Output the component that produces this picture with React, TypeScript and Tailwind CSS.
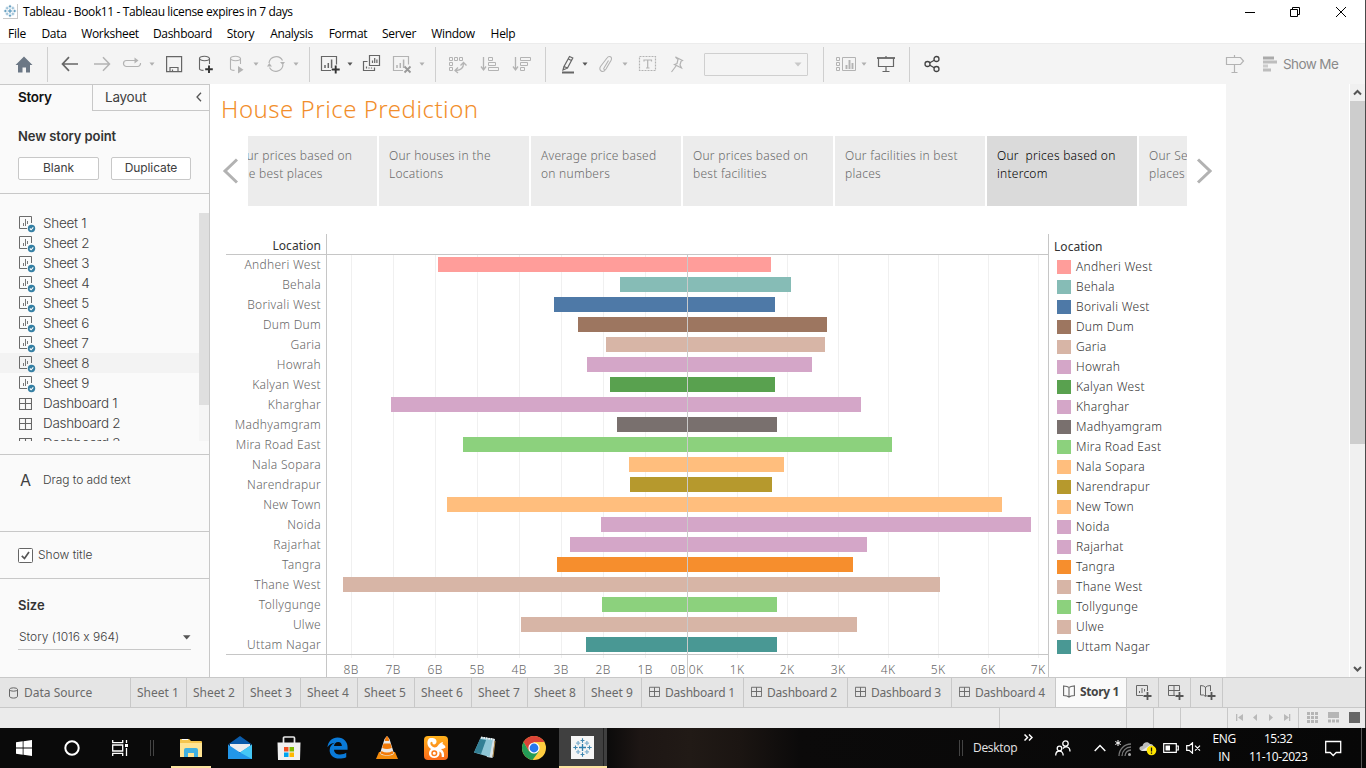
import type { ReactNode } from "react";

const LOCATIONS: { name: string; color: string; left: number; right: number }[] = [
  { name: "Andheri West", color: "#ff9d9a", left: 249, right: 84 },
  { name: "Behala", color: "#86bcb6", left: 67, right: 104 },
  { name: "Borivali West", color: "#4e79a7", left: 133, right: 88 },
  { name: "Dum Dum", color: "#9d7660", left: 109, right: 140 },
  { name: "Garia", color: "#d7b5a6", left: 81, right: 138 },
  { name: "Howrah", color: "#d4a6c8", left: 100, right: 125 },
  { name: "Kalyan West", color: "#59a14f", left: 77, right: 88 },
  { name: "Kharghar", color: "#d4a6c8", left: 296, right: 174 },
  { name: "Madhyamgram", color: "#79706e", left: 70, right: 90 },
  { name: "Mira Road East", color: "#8cd17d", left: 224, right: 205 },
  { name: "Nala Sopara", color: "#ffbe7d", left: 58, right: 97 },
  { name: "Narendrapur", color: "#b6992d", left: 57, right: 85 },
  { name: "New Town", color: "#ffbe7d", left: 240, right: 315 },
  { name: "Noida", color: "#d4a6c8", left: 86, right: 344 },
  { name: "Rajarhat", color: "#d4a6c8", left: 117, right: 180 },
  { name: "Tangra", color: "#f68e2d", left: 130, right: 166 },
  { name: "Thane West", color: "#d7b5a6", left: 344, right: 253 },
  { name: "Tollygunge", color: "#8cd17d", left: 85, right: 90 },
  { name: "Ulwe", color: "#d7b5a6", left: 166, right: 170 },
  { name: "Uttam Nagar", color: "#499894", left: 101, right: 90 },
];

const GRID_X = [24, 66, 108, 150, 192, 234, 276, 318, 410, 460, 511, 561, 611, 661, 711];
const TICKS: [string, number][] = [
  ["8B", 24], ["7B", 66], ["6B", 108], ["5B", 150], ["4B", 192], ["3B", 234], ["2B", 276], ["1B", 318],
  ["0B", 351], ["0K", 369], ["1K", 410], ["2K", 460], ["3K", 511], ["4K", 561], ["5K", 611], ["6K", 661], ["7K", 711],
];

const MENUS: [string, string][] = [
  ["File", "w-[34px]"], ["Data", "w-[40px]"], ["Worksheet", "w-[72px]"], ["Dashboard", "w-[73px]"], ["Story", "w-[43px]"],
  ["Analysis", "w-[59px]"], ["Format", "w-[54px]"], ["Server", "w-[48px]"], ["Window", "w-[60px]"], ["Help", "w-[40px]"],
];

const POINTS = [
  ["Our prices based on", "the best places"],
  ["Our houses in the", "Locations"],
  ["Average price based", "on numbers"],
  ["Our prices based on", "best facilities"],
  ["Our facilities in best", "places"],
  ["Our\u00a0 prices based on", "intercom"],
  ["Our Services in best", "places"],
];

function Ico({ className = "", w = 20, h = 20, c = "#666", sw = 1, children }: { className?: string; w?: number; h?: number; c?: string; sw?: number; children: ReactNode }) {
  return (
    <svg className={`shrink-0 ${className}`} width={w} height={h} viewBox={`0 0 ${w} ${h}`} fill="none" stroke={c} strokeWidth={sw}>
      {children}
    </svg>
  );
}

const Sep = ({ className }: { className: string }) => <div className={`h-[35px] w-px shrink-0 bg-[#cfcfcf] ${className}`} />;

const Caret = ({ className, c = "#b0b0b0" }: { className: string; c?: string }) => (
  <svg className={`shrink-0 ${className}`} width="6" height="4" viewBox="0 0 6 4">
    <path d="M.5.5h5L3 3.7z" fill={c} />
  </svg>
);

function TableauMark({ size, className = "" }: { size: number; className?: string }) {
  return (
    <svg className={className} width={size} height={size} viewBox="0 0 24 24" fill="none">
      <path d="M12 8v8M8 12h8" stroke="#2f7fae" strokeWidth="1.5" />
      <path d="M12 1.5v5M9.8 4h4.4M12 17.5v5M9.8 20h4.4M1.5 12h5M4 9.8v4.4M17.5 12h5M20 9.8v4.4" stroke="#3f87b0" strokeWidth="1.3" />
      <path d="M7 4.5v5M4.5 7h5M17 4.5v5M14.5 7h5M7 14.5v5M4.5 17h5M17 14.5v5M14.5 17h5" stroke="#85b3cf" strokeWidth="1.6" />
    </svg>
  );
}

function Toolbar() {
  const g = "#b3b3b3";
  return (
    <div className="flex h-[41px] items-center border-t border-[#ececec] bg-[#f4f4f4]">
      <Ico className="ml-[14px]" c="none">
        <path d="M10 2.500 18.500 11H16v7.500h-4v-5H8.500v5H4V11H1.500z" fill="#6b7785" />
      </Ico>
      <Sep className="ml-[13px]" />
      <Ico className="ml-3" sw={1.700}><path d="M2.500 10H18M9 3.200 2.500 10 9 16.800" /></Ico>
      <Ico className="ml-3" sw={1.500} c={g}><path d="M2 10h15.500M11 3.200 17.500 10 11 16.800" /></Ico>
      <Ico className="ml-[10px]" c={g} sw={1.200}>
        <path d="M11 6.500H4.500a3 3 0 0 0 0 6h11a3 3 0 0 0 3-3.500M8 6.500h7" />
        <path d="m12.500 3.500 4 3-4 3z" fill={g} stroke="none" />
      </Ico>
      <Caret className="ml-[7px]" />
      <Ico className="ml-[9px]" sw={1.200}><path d="M2.600 2.600h15v15h-15zM6 17.500v-4h8v4M8.500 17v-1.500" /></Ico>
      <Ico className="ml-3" sw={1.100}>
        <ellipse cx="8.500" cy="4.500" rx="5" ry="2.200" /><path d="M3.500 4.500v10.200c0 .8 1.500 1.600 4 1.700M13.500 4.500V10" />
        <path d="M13 11.500v7.500M9.200 15.300h7.600" stroke="#333" strokeWidth="1.900" />
      </Ico>
      <Ico className="ml-[11px]" c={g} sw={1.100}>
        <ellipse cx="8.500" cy="4.500" rx="5" ry="2.200" /><path d="M3.500 4.500v10.200c0 .8 1.500 1.600 4 1.700M13.500 4.500V10" />
        <path d="m11 12 5.500 3.700-5.500 3.700z" fill={g} stroke="none" />
      </Ico>
      <Caret className="ml-[6px]" />
      <Ico className="ml-[7px]" c={g} sw={1.200}>
        <path d="M3 9a7.200 7.200 0 0 1 13.500-2.500M17 10.500A7.200 7.200 0 0 1 3.500 13.500" />
        <path d="M14 8h5l-2.300 3zM1 12.500h5L3.300 9z" fill={g} stroke="none" />
      </Ico>
      <Caret className="ml-[7px]" />
      <Sep className="ml-[10px]" />
      <Ico className="ml-[10px]">
        <path d="M11 16.500H1.500v-14h15v8" strokeWidth="1.200" /><path d="M5 14v-3M8.300 14V9M11.600 14V5.500" strokeWidth="1.500" />
        <path d="M15.700 11.500v8M11.700 15.500h8" stroke="#333" strokeWidth="1.900" />
      </Ico>
      <Caret className="ml-[7px]" c="#555" />
      <Ico className="ml-[9px]">
        <path d="M7.500 1.500h10v10h-10zM5.500 7.500h-4v9h11v-3" strokeWidth="1.200" /><path d="M10.500 9V6.500M12.700 9V4M14.900 9V5.500M4.500 14.500v-2M7 14.500v-1M9.500 14.500v-1" strokeWidth="1.200" />
      </Ico>
      <Ico className="ml-[10px]" c={g}>
        <path d="M11 16.500H1.500v-14h15v8" strokeWidth="1.200" /><path d="M5 14v-3M8.300 14V9M11.600 14V5.500" strokeWidth="1.500" />
        <path d="m12.500 12.500 6 6m0-6-6 6" stroke="#999" strokeWidth="1.800" />
      </Ico>
      <Caret className="ml-[7px]" />
      <Sep className="ml-[10px]" />
      <Ico className="ml-3" c={g}>
        <path d="M1.500 3.500h3v3h-3zM6.500 3.500h3v3h-3zM11.500 3.500h3v3h-3zM1.500 8.500h3v3h-3zM1.500 13.500h3v3h-3z" />
        <path d="M8 16.500c4.500-.3 7.500-3 7.500-7M12.500 11.500l3-3 3 3M10 13.500l-3 3 3 2.500" strokeWidth="1.300" />
      </Ico>
      <Ico className="ml-3" c={g}>
        <path d="M3.500 3v12.500M1 12.500 3.500 16 6 12.500" strokeWidth="1.300" /><path d="M8.500 3.500h4v3h-4zM8.500 8.500h7v3h-7zM8.500 13.500h10v3h-10z" />
      </Ico>
      <Ico className="ml-3" c={g}>
        <path d="M3.500 3v12.500M1 12.500 3.500 16 6 12.500" strokeWidth="1.300" /><path d="M8.500 3.500h10v3h-10zM8.500 8.500h7v3h-7zM8.500 13.500h4v3h-4z" />
      </Ico>
      <Sep className="ml-[13px]" />
      <Ico className="ml-3">
        <path d="M11.500 2.500 14.800 4 9.500 14 6 12.500zM6 12.500l-1 3.500 4.500-2M10.500 5l3.300 1.700" strokeWidth="1.200" /><path d="M4 18.500h12" strokeWidth="2" />
      </Ico>
      <Caret className="ml-1" c="#555" />
      <Ico className="ml-2" c={g} sw={1.100}>
        <path d="m12.500 6.500-4.500 7.500c-1 1.500 1 2.500 2 1l5-8.500c2-3.500-2-5.500-4-2.500L4.500 12.500c-2.500 4 2.500 7 5 3" />
      </Ico>
      <Caret className="ml-[6px]" />
      <Ico className="ml-[10px]" c={g} sw={1.200}>
        <path d="M1.500 2.500h16v14h-16z" strokeDasharray="2 1" />
        <path d="M6 7.500V6h7.500v1.500M9.700 6v8M8 14h3.500" />
      </Ico>
      <Ico className="ml-[9px]" c={g} sw={1.200}>
        <path d="m8.500 3 7 3.500-1.500.8-1 3.700 1.500 3-7-3.500 2.500-1 1-4zM9 12l-4.500 6" />
      </Ico>
      <div className="ml-[17px] flex h-[23px] w-[104px] items-center justify-end rounded-[1px] border border-[#cfcfcf] pr-[5px]">
        <svg width="8" height="5"><path d="M.5.5h7L4 4.500z" fill="#c8c8c8" /></svg>
      </div>
      <Sep className="ml-[15px]" />
      <Ico className="ml-[11px]" w={22} c={g}>
        <path d="M1.500 3.500h3v3h-3zM1.500 8.500h3v3h-3zM1.500 13.500h3v3h-3zM7.500 3.500h13v13h-13z" /><path d="M11.500 15v-4M14.500 15V6M17.500 15V9" strokeWidth="1.900" />
      </Ico>
      <Caret className="ml-1" />
      <Ico className="ml-[9px]">
        <path d="M1 4h18" strokeWidth="1.800" /><path d="M2.500 4v8.500h15V4M10 2v2M10 12.500v5M6.500 17.500h7" strokeWidth="1.200" />
      </Ico>
      <Sep className="ml-[13px]" />
      <Ico className="ml-3" c="#444" sw={1.300}>
        <circle cx="5.500" cy="10" r="2.500" /><circle cx="14.500" cy="5" r="2.500" /><circle cx="14.500" cy="15" r="2.500" /><path d="m7.800 8.800 4.500-2.500M7.800 11.200l4.500 2.500" />
      </Ico>
      <Ico className="ml-[283px]" c={g} sw={1.200}>
        <path d="M9.500 1v2M9.500 10.500v8M6.500 18.500h6M1.500 3.500h14l3 3.500-3 3.500h-14z" />
      </Ico>
      <Ico className="ml-[17px]" w={16} c="none">
        <path d="M1 2.500h11v3H1z" fill="#aaa" /><path d="M1 6.500h14v3H1z" fill="#bdbdbd" /><path d="M1 10.500h5v3H1z" fill="#ccc" /><path d="M1 14.500h8v3H1z" fill="#bdbdbd" />
      </Ico>
      <span className="ml-[5px] font-['Inter'] text-[13.500px] tracking-[-0.600px] text-[#8a8a8a]">Show Me</span>
    </div>
  );
}

const DashIcon = ({ size = 13 }: { size?: number }) => (
  <svg className="shrink-0" width={size} height={size} viewBox="0 0 13 13" fill="none" stroke="#666">
    <path d="M.5 1.500h12v11H.5zM6.500 1.500v11M.5 6.500h12" strokeWidth="1.100" />
  </svg>
);

function SheetIcon() {
  return (
    <svg className="shrink-0" width="17" height="17" viewBox="0 0 17 17" fill="none">
      <path d="M8 12.500H.5V.5h12V7" stroke="#6b6b6b" />
      <path d="M4.500 10V7M6.500 10V3M8.500 8V5" stroke="#777" />
      <circle cx="12.500" cy="12.500" r="3.700" fill="#357fa3" />
      <path d="m10.800 12.500 1.300 1.300 2.200-2.500" stroke="#fff" strokeWidth="1.100" />
    </svg>
  );
}

function SidePanel() {
  return (
    <aside className="flex h-[593px] w-[210px] shrink-0 flex-col border-t border-r border-[#c8c8c8] bg-[#fafafa] font-['Inter'] text-[#404040] [font-feature-settings:'calt'_0]">
      <div className="flex h-[26px]">
        <div className="w-[92px] pt-[2px] pl-[18px] text-[13.500px] leading-[21px] font-semibold tracking-[-0.300px] text-[#111]">Story</div>
        <div className="flex flex-1 justify-between border-b border-l border-[#c8c8c8] pt-[2px] pr-[6px] pl-[12px] text-[13.500px] leading-[21px] tracking-[-0.250px]">
          <span>Layout</span>
          <svg className="mt-[5px]" width="8" height="10" viewBox="0 0 8 10" fill="none" stroke="#555" strokeWidth="1.300"><path d="M6 .7 2 5l4 4.300" /></svg>
        </div>
      </div>
      <div className="flex h-[83px] flex-col border-b border-[#c8c8c8] px-[18px] pt-[15px]">
        <div className="text-[13px] leading-[20px] font-semibold tracking-[-0.080px] text-[#333]">New story point</div>
        <div className="mt-[11px] flex gap-[12px] text-[12px]">
          <div className="flex h-[23px] w-[81px] items-center justify-center rounded-[2px] border border-[#c8c8c8] bg-white pb-px">Blank</div>
          <div className="flex h-[23px] w-[80px] items-center justify-center rounded-[2px] border border-[#c8c8c8] bg-white pb-px tracking-[-0.100px]">Duplicate</div>
        </div>
      </div>
      <div className="h-[261px] border-b border-[#c8c8c8] pt-[19px]">
        <div className="flex h-[228px]">
          <div className="flex-1 overflow-hidden">
            {Array.from({ length: 12 }, (_, i) => (
              <div key={i} className={`flex h-[20px] items-center pl-[19px] text-[13.500px] font-light tracking-[-0.300px] ${i === 7 ? "bg-[#f3f3f3]" : ""}`}>
                <div className="flex w-[24px]">{i < 9 ? <span className="mt-[2px]"><SheetIcon /></span> : <DashIcon />}</div>
                {i < 9 ? `Sheet ${i + 1}` : `Dashboard ${i - 8}`}
              </div>
            ))}
          </div>
          <div className="w-[10px] bg-[#f5f5f5]"><div className="h-[192px] bg-[#dfdfdf]" /></div>
        </div>
      </div>
      <div className="flex h-[77px] items-start border-b border-[#c8c8c8] pt-[15px] pl-[20px] text-[12px]">
        <span className="w-[23px] text-[16px] leading-[20px]">A</span>
        <span className="leading-[19px] font-light tracking-[-0.080px]">Drag to add text</span>
      </div>
      <div className="flex h-[47px] items-center gap-[5px] border-b border-[#c8c8c8] pl-[18px] text-[12px] font-light">
        <svg width="15" height="15" viewBox="0 0 15 15" fill="none"><rect x=".5" y=".5" width="14" height="14" rx="1" fill="#fff" stroke="#666" /><path d="m3.800 7.800 2.700 2.700 4.500-6.500" stroke="#555" strokeWidth="1.700" /></svg>
        Show title
      </div>
      <div className="px-[18px] pt-[16px]">
        <div className="text-[13px] leading-[20px] font-semibold text-[#333]">Size</div>
        <div className="mt-[11px] flex h-[24px] items-center justify-between border-b border-[#c8c8c8] pr-0 pb-px pl-px text-[12px] font-light">
          Story (1016 x 964)
          <svg width="8" height="5"><path d="M0 .3h7.500L3.700 4.500z" fill="#555" /></svg>
        </div>
      </div>
    </aside>
  );
}

function StoryView() {
  return (
    <section className="h-[593px] w-[1016px] shrink-0 overflow-hidden bg-white font-['Noto_Sans',sans-serif] text-[12px] font-light">
      <h1 className="h-[52px] pt-[8px] pl-[11px] text-[24px] leading-[34px] tracking-[0.500px] text-[#f28e2b]">House Price Prediction</h1>
      <div className="flex h-[70px] items-center">
        <svg className="mr-[11px] mb-px ml-[12px] shrink-0" width="16" height="26" viewBox="0 0 16 26" fill="none" stroke="#b2b2b2" strokeWidth="3"><path d="M15 1.500 3 13l12 11.500" /></svg>
        <div className="ml-[-1px] flex w-[939px] overflow-hidden">
          <div className="-ml-[21px] flex gap-[2px]">
            {POINTS.map(([a, b], i) => (
              <div key={i} className={`h-[70px] w-[150px] shrink-0 pt-[11px] pl-[10px] leading-[18px] tracking-[0.250px] whitespace-nowrap ${i === 5 ? "bg-[#dadada] text-black" : "bg-[#ececec] text-[#6a6a6a]"}`}>
                <div>{a}</div>
                <div>{b}</div>
              </div>
            ))}
          </div>
        </div>
        <svg className="mb-px ml-[9px] shrink-0" width="16" height="26" viewBox="0 0 16 26" fill="none" stroke="#b2b2b2" strokeWidth="3"><path d="m2 1.500 12 11.500L2 24.500" /></svg>
      </div>
      <div className="mt-[28px] flex">
        <div className="ml-[16px] w-[101px] border-r border-[#c6c6c6] text-right tracking-[0.300px] text-[#666]">
          <div className="h-[21px] border-b border-[#c6c6c6] pt-[3px] pr-[5px] leading-[18px] font-normal tracking-[0.050px] text-[#333]">Location</div>
          <div className="h-[400px] border-b border-[#c6c6c6]">
            {LOCATIONS.map((l) => <div key={l.name} className="h-[20px] pr-[5px] leading-[20px] whitespace-nowrap">{l.name}</div>)}
          </div>
        </div>
        <div className="relative h-[443px] w-[722px] border-r border-[#c6c6c6]">
          <div className="h-[21px] border-b border-[#c6c6c6]" />
          {GRID_X.map((x) => <div key={x} className="absolute top-[21px] h-[403px] w-px bg-[#f0f0f0]" style={{ left: x }} />)}
          <div className="relative h-[400px] border-b border-[#c6c6c6] pt-[2px]">
            {LOCATIONS.map((l) => (
              <div key={l.name} className="flex h-[20px]">
                <div className="flex w-[360px] justify-end"><div className="h-[15px]" style={{ width: l.left, background: l.color }} /></div>
                <div className="h-[15px]" style={{ width: l.right, background: l.color }} />
              </div>
            ))}
          </div>
          <div className="absolute top-[21px] left-[360px] h-[422px] w-px bg-[#c9c9c9]" />
          {TICKS.map(([t, x]) => (
            <span key={t} className="absolute top-[426px] w-[30px] text-center leading-[20px] tracking-[0.200px] text-[#666]" style={{ left: x - 15 }}>{t}</span>
          ))}
        </div>
        <div className="pt-[4px] pl-[5px] tracking-[0.300px] text-[#333]">
          <div className="leading-[18px] font-normal tracking-[0.050px]">Location</div>
          {LOCATIONS.map((l) => (
            <div key={l.name} className="flex h-[20px] items-center gap-[5px] pl-[3px] leading-[20px]">
              <span className="mt-[2px] size-[14px]" style={{ background: l.color }} />
              <span className="pt-px">{l.name}</span>
            </div>
          ))}
        </div>
      </div>
    </section>
  );
}

function Scrollbar() {
  return (
    <div className="flex h-[593px] w-[15px] flex-col justify-between bg-[#f0f0f0]">
      <div>
        <svg width="15" height="17" fill="none" stroke="#555" strokeWidth="2"><path d="m4 10.500 3.500-3.500 3.500 3.500" /></svg>
        <div className="h-[343px] bg-[#cdcdcd]" />
      </div>
      <svg width="15" height="17" fill="none" stroke="#555" strokeWidth="2"><path d="m4 7 3.500 3.500L11 7" /></svg>
    </div>
  );
}

const BookIcon = () => (
  <svg className="shrink-0" width="12" height="13" viewBox="0 0 12 13" fill="none" stroke="#666" strokeWidth="1.100"><path d="M6 2.500v9M.6 1l3.400.5 2 1 2-1L11.400 1v9.500L8 11l-2 1.200L4 11l-3.400-.5z" /></svg>
);
const Plus = () => <path d="M12.500 8v8M8.500 12h8" stroke="#555" strokeWidth="1.800" />;

const SHEET_W = ["w-[56px]", "w-[57px]", "w-[57px]", "w-[57px]", "w-[57px]", "w-[57px]", "w-[56px]", "w-[57px]", "w-[57px]"];
const DASH_W = ["w-[102px]", "w-[104px]", "w-[104px]", "w-[104px]"];

function TabStrip() {
  return (
    <div className="flex h-[31px] border-y border-[#c8c8c8] bg-[#e5e5e5] font-['Noto_Sans',sans-serif] text-[12px] tracking-[0px] text-[#6a6a6a]">
      <div className="flex w-[131px] items-center gap-[6px] border-r border-[#c8c8c8] pl-[9px]">
        <svg width="9" height="12" viewBox="0 0 9 12" fill="none" stroke="#666"><ellipse cx="4.500" cy="2.500" rx="4" ry="1.700" /><path d="M.5 2.500v6.700c0 2.500 8 2.500 8 0V2.500" /></svg>
        <span>Data Source</span>
      </div>
      {SHEET_W.map((w, i) => <div key={i} className={`flex items-center border-r border-[#c8c8c8] pl-[6px] whitespace-nowrap ${w}`}>Sheet {i + 1}</div>)}
      {DASH_W.map((w, i) => <div key={i} className={`flex items-center gap-[5px] border-r border-[#c8c8c8] pl-[7px] tracking-[-0.200px] whitespace-nowrap ${w}`}><span className="mb-[3px]"><DashIcon size={11} /></span>Dashboard {i + 1}</div>)}
      <div className="flex w-[71px] items-center gap-[5px] border-r border-[#c8c8c8] bg-[#fafafa] pb-[2px] pl-[7px] font-bold tracking-[-0.350px] whitespace-nowrap text-[#444]"><BookIcon />Story 1</div>
      <div className="flex w-[32px] items-center justify-center border-r border-[#c8c8c8] pl-[2px]"><svg width="17" height="17" viewBox="0 0 17 17" fill="none" stroke="#666"><path d="M8 11.500H1.500v-10h11V7M4.500 9V7M7 9V4M9.500 7.500V5" /><Plus /></svg></div>
      <div className="flex w-[32px] items-center justify-center border-r border-[#c8c8c8] pl-[2px]"><svg width="17" height="17" viewBox="0 0 17 17" fill="none" stroke="#666"><path d="M8 11.500H1.500v-10h11V7M7 1.500v10M1.500 6.500h11" /><Plus /></svg></div>
      <div className="flex w-[32px] items-center justify-center border-r border-[#c8c8c8] pl-[2px]"><svg width="17" height="17" viewBox="0 0 17 17" fill="none" stroke="#666"><path d="M6.500 3v9M8 11.500 6.500 12.500 4.500 11 1.500 11V1.500l3 .5 2 1.300L8.500 2l3-.5V7" /><Plus /></svg></div>
    </div>
  );
}

function StatusBar() {
  return (
    <div className="flex h-[20px] bg-[#ebebeb]">
      <div className="w-[1000px] shrink-0 border-r border-[#c8c8c8]" />
      <div className="w-[127px] shrink-0 border-r border-[#c8c8c8]" />
      <div className="w-[27px] shrink-0 border-r border-[#c8c8c8]" />
      <div className="w-[27px] shrink-0 border-r border-[#c8c8c8]" />
      <div className="w-[47px] shrink-0 border-r border-[#c8c8c8]" />
      <svg className="shrink-0" width="70" height="20" viewBox="0 0 70 20" fill="#b9b9b9">
        <path d="M8 6h1.300v7H8zM15 6v7l-5-3.500zM29 6v7l-4-3.500zM41 6v7l4-3.500zM56 6v7l5-3.500zM61 6h1.300v7H61z" />
      </svg>
      <div className="h-full w-px shrink-0 bg-[#c8c8c8]" />
      <svg className="shrink-0" width="66" height="20" viewBox="0 0 66 20" fill="#b5b5b5">
        {[0, 4, 8].map((y) => [0, 4, 8].map((x) => <rect key={`${x}-${y}`} x={8 + x} y={4 + y} width="3" height="3" />))}
        <path d="M29 4h11v6H29zM29 11.500h3v3h-3zM33 11.500h3v3h-3zM37 11.500h3v3h-3z" />
        <path d="M50 4h11v11H50z" fill="#666" />
      </svg>
    </div>
  );
}

const Slot = ({ width = "w-[49px]", children }: { width?: string; children: ReactNode }) => (
  <div className={`flex h-[40px] shrink-0 items-center justify-center ${width}`}>{children}</div>
);

function Taskbar() {
  return (
    <div className="flex h-[40px] items-center bg-[linear-gradient(90deg,#0a0a0a_0,#0a0a0a_605px,#1d1614_640px,#211a16_690px,#1b1512_740px,#0b0a0a_800px,#070707_100%)] font-['Open_Sans',sans-serif] text-[12px] text-white">
      <Slot width="w-[48px]"><svg width="16" height="16" viewBox="0 0 16 16" fill="#fff"><path d="M0 2.300 6.700 1.300v6.200H0zM7.500 1.200 16 0v7.500H7.500zM0 8.400h6.700v6.300L0 13.700zM7.500 8.400H16V16l-8.500-1.200z" /></svg></Slot>
      <Slot width="w-[48px]"><Ico w={16} h={16} c="#fff" sw={2}><circle cx="8" cy="8" r="6.700" /></Ico></Slot>
      <Slot width="w-[48px]"><Ico w={16} h={16} c="#fff" sw={1.300}><path d="M.7 0v2.700h10V0M.7 16v-2.700h10V16M.7 5h10v6H.7zM14.500 0v3M14.500 8v8" /><path d="M13 4h3v3h-3z" fill="#fff" stroke="none" /></Ico></Slot>
      <div className="ml-[6px] h-[16px] w-[4px] shrink-0 border-x border-[#444]" />
      <div className="w-[12px] shrink-0" />
      <Slot>
        <div className="flex h-[40px] w-[40px] flex-col items-center justify-between border-b-2 border-[#fbe3a0] pt-[10px]">
          <svg width="22" height="20" viewBox="0 0 22 20"><path d="M0 1.500Q0 1 .8 1H9l2 2h10q1 0 1 1v15H0z" fill="#f5c64f" /><path d="M0 5h22v14H0z" fill="#ffe493" /><path d="M2 1.500h6" stroke="#fff" /><path d="M4 19v-7q0-2 2-2h10q2 0 2 2v7h-4v-4H8v4z" fill="#3fb0e0" /></svg>
        </div>
      </Slot>
      <Slot><svg width="24" height="24" viewBox="0 0 24 24"><path d="M0 8.500 12 0l12 8.500z" fill="#0b5cab" /><path d="M2 8h20v8H2z" fill="#eee" /><path d="M0 8.500 12 16.500 24 8.500V23H0z" fill="#2296e8" /><path d="M24 8.500V23L12 16.500z" fill="#45c7f5" /></svg></Slot>
      <Slot><svg width="24" height="25" viewBox="0 0 24 25"><path d="M6.500 7V2Q6.500 1 7.500 1h9q1 0 1 1v5" fill="none" stroke="#e8e8e8" strokeWidth="1.700" /><path d="M.5 6.500h23L23 24H1z" fill="#f1f1f1" /><path d="M7 11h4.500v4.500H7z" fill="#f25022" /><path d="M12.500 11H17v4.500h-4.500z" fill="#7fba00" /><path d="M7 16.500h4.500V21H7z" fill="#00a4ef" /><path d="M12.500 16.500H17V21h-4.500z" fill="#ffb900" /></svg></Slot>
      <Slot><svg width="21" height="22" viewBox="0 0 24 24" fill="#0a7ad8"><path d="M.5 11C1.500 4 6 0 12 0c7.500 0 11.500 5.500 11.500 11v3H8c.3 4 3.300 5.500 7 5.500 3 0 5-.8 7-2v5c-2.500 1.200-5 1.500-8 1.500C7.500 24 3 20 3 14.500 3 10.500 5.300 7.500 9 6 5.500 6.500 2.500 8 .5 11zM8 9.800h9C17 6.800 15.500 5 12.700 5 10 5 8.300 7 8 9.800z" /></svg></Slot>
      <Slot><svg width="22" height="24" viewBox="0 0 22 24"><path d="M3 16h16l3 7H0z" fill="#f48b0c" /><path d="M8.500 3 11 0l2.500 3L18 17.500c-2 3-12 3-14 0z" fill="#e9e9e9" /><path d="M9.500 2 11 0l1.500 2 .8 3H8.700zM7.500 7.500h7l1.300 4.500q-4.800 2-9.600 0zM5.500 15q5.500 3 11 0l1 2.500q-6.500 3.500-13 0z" fill="#f37a08" /></svg></Slot>
      <Slot><svg width="24" height="24" viewBox="0 0 24 24"><defs><linearGradient id="uc" x2="0" y2="1"><stop stopColor="#ffb21c" /><stop offset="1" stopColor="#fb6a1a" /></linearGradient></defs><rect width="24" height="24" rx="4" fill="url(#uc)" /><path d="M5 2.500c3.500-1 8-.2 7.500 3.500-.3 2.300-2.800 3.500-4 1.500C8.800 6 7.500 5 6.500 6.500c-.7 1.500.8 3.500 2.500 4.500 2 1 4 .3 5-1.500.8-1.500 2.500-3 5-3.500l-.5 2c1.800.7 3 2.200 3 3.500-1.500 1-3 1.500-4.500 1.500 2.500 1.500 3.500 4.500 3 8h-2.300c.3-3-.5-5-2.500-5.500 1.300 3-1.200 6.500-4.700 6.500C4.500 22 3.500 16 7 13 3.500 11 2 6 5 2.500z" fill="#fff" /><circle cx="10.300" cy="17.300" r="2.300" fill="none" stroke="#fb7a1a" strokeWidth="1.500" /></svg></Slot>
      <Slot><svg width="24" height="24" viewBox="0 0 24 24"><path d="m8 1 14 2-2.500 19L14 21z" fill="#d8e3e7" /><path d="m8 1 12 2-3.500 18L1 16.500z" fill="#8ec6d6" /><path d="m7 3 6 1-5 14-7-1.500z" fill="#327f94" /><path d="M8 1.500 21 3.500" stroke="#eee" strokeWidth="2" strokeDasharray="1.500 1" /><path d="m22 5-2 16" stroke="#b28d4d" /></svg></Slot>
      <Slot><svg width="24" height="24" viewBox="0 0 24 24"><circle cx="12" cy="12" r="12" fill="#ffcd40" /><path d="M1.600 6A12 12 0 0 1 22.400 6H12l-5.200 9z" fill="#db4437" /><path d="M1.600 6 6.800 15 12 18l-1.500 5.900A12 12 0 0 1 1.600 6z" fill="#249c57" /><path d="M10.500 23.900 17.200 15 12 17.500 7 15z" fill="#249c57" /><circle cx="12" cy="12" r="5.600" fill="#fff" /><circle cx="12" cy="12" r="4.400" fill="#2878ed" /></svg></Slot>
      <div className="ml-px flex h-[40px] w-[48px] shrink-0 border-b-2 border-[#fbe3a0] bg-[#404040]">
        <div className="flex w-[45px] items-center justify-center border-r border-[#222] pt-[1px] pl-[2px]"><div className="bg-[#f6f6f6] p-px"><TableauMark size={21} /></div></div>
      </div>
      <div className="ml-[352px] h-[16px] w-[4px] shrink-0 border-x border-[#444]" />
      <span className="ml-[10px] text-[12px] tracking-[-0.300px] text-[#e5e5e5]">Desktop</span>
      <Ico className="mb-[21px] ml-[7px]" w={9} h={7} c="#fff" sw={1.500}><path d="m.5.500 3 3-3 3M5 .5l3 3-3 3" /></Ico>
      <Ico className="ml-[22px]" w={16} h={16} c="#fff" sw={1.300}><circle cx="10.500" cy="3.500" r="2.700" /><circle cx="4.500" cy="8.500" r="2.300" /><path d="M.7 15.500c0-6 7.500-6 7.500 0M8 8.500c2.500-3 7-2 7 3" /></Ico>
      <Ico className="ml-[23px]" w={12} h={8} c="#fff" sw={1.400}><path d="M.7 7 6 1.500 11.300 7" /></Ico>
      <Ico className="ml-[9px]" w={17} h={17} c="#777" sw={1.300}><path d="M4 16A12 12 0 0 1 16 4M7 16a9 9 0 0 1 9-9M10 16a6 6 0 0 1 6-6" /><circle cx="14.500" cy="14.500" r="1.500" fill="#aaa" stroke="none" /><path d="M3 0v6M.3 1.500l5.400 3M5.700 1.500l-5.400 3" stroke="#fff" strokeWidth="1" /></Ico>
      <svg className="ml-[7px] shrink-0" width="18" height="15" viewBox="0 0 18 15"><path d="M3 10C-1 9 0 5 3.500 5 4 1 9 0 11 3c3-.5 5 3 3 7z" fill="#bcbcbc" /><path d="M2 10 11 4l4 5z" fill="#e9e9e9" /><circle cx="12.500" cy="9.500" r="4.800" fill="#ffe500" /><path d="M12.500 6.500v4M12.500 11.500v1.300" stroke="#111" strokeWidth="1.300" /></svg>
      <Ico className="ml-[6px]" w={16} h={10} c="#fff" sw={1.200}><path d="M.7.7h12.600v8.600H.7zM13.500 3h1.800v4h-1.800" /><path d="M2.500 2.500H7v5H2.500z" fill="#fff" stroke="none" /></Ico>
      <Ico className="ml-[7px]" w={15} h={12} c="#fff" sw={1.200}><path d="M.7 3.700h2.500L6.500.8v10.400L3.200 8.300H.7zM9 3.700l5 5M14 3.700l-5 5" /></Ico>
      <div className="ml-[7px] w-[32px] shrink-0 text-center text-[12px] leading-[18px] tracking-[-0.300px]"><div>ENG</div><div>IN</div></div>
      <div className="ml-[3px] w-[70px] shrink-0 text-center text-[12px] leading-[18px] tracking-[-0.400px] whitespace-nowrap"><div>15:32</div><div>11-10-2023</div></div>
      <Ico className="ml-[12px]" w={17} h={17} c="#fff" sw={1.300}><path d="M.7 1.500h15v11h-4.500L8.200 15.500l-3-3H.7z" /></Ico>
      <div className="ml-[19px] h-[40px] w-px shrink-0 bg-[#555]" />
    </div>
  );
}

export default function App() {
  return (
    <div className="h-[768px] w-[1366px] overflow-hidden bg-white">
      <div className="h-[728px] border-r border-[#4a4a4a]">
        <header className="flex h-[23px] items-center font-['Open_Sans',sans-serif] text-[12px] text-black">
          <div className="mb-[1px] ml-[3px] border-r border-b border-[#c8c8c8] bg-white"><TableauMark size={14} /></div>
          <span className="ml-[5px] tracking-[-0.370px]">Tableau - Book11 - Tableau license expires in 7 days</span>
          <Ico className="ml-auto" w={10} h={10} c="#000"><path d="M0 5.500h10" /></Ico>
          <Ico className="ml-[35px]" w={10} h={10} c="#000"><path d="M.5 2.500h7v7h-7zM2.500 2.500v-2h7v7h-2" /></Ico>
          <Ico className="mr-[19px] ml-[36px]" w={10} h={10} c="#000"><path d="m0 0 10 10M10 0 0 10" /></Ico>
        </header>
        <nav className="flex h-[20px] items-center pt-[2px] font-['Open_Sans',sans-serif] text-[12px] text-black">
          {MENUS.map(([m, w]) => <span key={m} className={`flex shrink-0 justify-center tracking-[-0.300px] ${w}`}>{m}</span>)}
        </nav>
        <Toolbar />
        <main className="flex h-[593px] bg-[#f4f4f4]">
          <SidePanel />
          <StoryView />
          <div className="flex-1 border-r border-white" />
          <Scrollbar />
        </main>
        <TabStrip />
        <StatusBar />
      </div>
      <Taskbar />
    </div>
  );
}
